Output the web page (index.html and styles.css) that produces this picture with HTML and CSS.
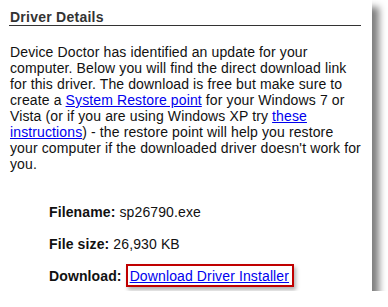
FILE: index.html
```html
<!DOCTYPE html>
<html lang="en">
<head>
  <meta charset="UTF-8" />
  <title>Driver Details</title>
  <link rel="stylesheet" href="styles.css">
</head>
<body>
  <div class="card">
    <div class="content">
      <h2 class="section-title">Driver Details</h2>

      <p class="intro">
        Device Doctor has identified an update for your computer. Below you will find the direct download link for this driver. The download is free but make sure to create a <a href="#">System Restore point</a> for your Windows 7 or Vista (or if you are using Windows XP try <a href="#">these instructions</a>) - the restore point will help you restore your computer if the downloaded driver doesn't work for you.
      </p>

      <div class="details">
        <div class="row"><span class="label">Filename:</span> sp26790.exe</div>
        <div class="row"><span class="label">File size:</span> 26,930 KB</div>
        <div class="row"><span class="label">Download:</span> <span class="highlight"><a href="#">Download Driver Installer</a></span></div>
      </div>
    </div>
  </div>
</body>
</html>
```

FILE: styles.css
```css
body {
  margin: 0;
  padding: 0;
  background: #fff;
  font-family: 'Liberation Sans', Arial, sans-serif;
  font-size: 14px;
  letter-spacing: 0.12px;
  color: #111;
}

.card {
  width: 372px;
  height: 291px;
  background: #fff;
  box-shadow: 7px 7px 7px rgba(0, 0, 0, 0.5);
  overflow: hidden;
}

.content {
  width: 352px;
  padding: 10px 0 0 9px;
}

.section-title {
  margin: 0;
  padding: 0 0 0 1px;
  font-size: 14px;
  font-weight: bold;
  letter-spacing: 0.25px;
  line-height: 15px;
  color: #333;
  border-bottom: 1px solid #333;
}

.intro {
  width: 351px;
  margin: 18px 0 0 1px;
  line-height: 16px;
}

a {
  color: #0000ee;
}

.details {
  margin: 32px 0 0 40px;
}

.row {
  line-height: 16px;
  margin-bottom: 16px;
}

.label {
  font-weight: bold;
}

.highlight {
  border: 2px solid #c00000;
  padding: 2px 3px 1px 2px;
  box-shadow: 2px 3px 4px rgba(0, 0, 0, 0.3);
}
```
